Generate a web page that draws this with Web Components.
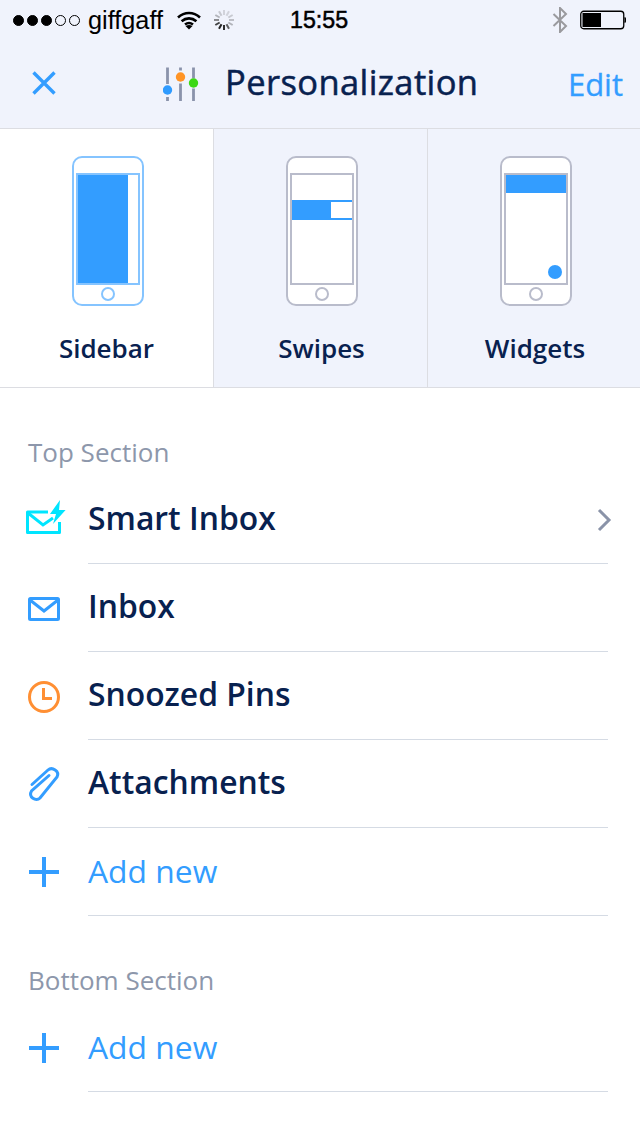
<!DOCTYPE html>
<html><head><meta charset="utf-8">
<style>
html,body{margin:0;padding:0;background:#fff}
body{width:640px;height:1136px;overflow:hidden;font-family:"Open Sans",sans-serif}
</style></head><body>
<app-header></app-header>
<tab-strip>
  <phone-tab label="Sidebar" kind="sidebar" active></phone-tab>
  <phone-tab label="Swipes" kind="swipes"></phone-tab>
  <phone-tab label="Widgets" kind="widgets"></phone-tab>
</tab-strip>
<section-title>Top Section</section-title>
<list-row icon="smart" chevron>Smart Inbox</list-row>
<list-row icon="inbox">Inbox</list-row>
<list-row icon="clock">Snoozed Pins</list-row>
<list-row icon="clip">Attachments</list-row>
<list-row icon="plus" add>Add new</list-row>
<section-title>Bottom Section</section-title>
<list-row icon="plus" add>Add new</list-row>
<script>
function def(name, css, html){
  customElements.define(name, class extends HTMLElement{
    connectedCallback(){
      const r=this.attachShadow({mode:'open'});
      r.innerHTML='<style>'+css+'</style>'+(typeof html==='function'?html(this):html);
    }
  });
}
const ops=[.15,.15,.2,.25,.3,.7,.95,1,.85,.5,.3,.2];
const spokes=ops.map((o,i)=>{const a=i*30*Math.PI/180;
  return `<line x1="${(11+5*Math.sin(a)).toFixed(2)}" y1="${(11-5*Math.cos(a)).toFixed(2)}" x2="${(11+10*Math.sin(a)).toFixed(2)}" y2="${(11-10*Math.cos(a)).toFixed(2)}" stroke="#222" stroke-width="2" stroke-opacity="${o}"/>`}).join('');
def('app-header',`
:host{display:block;height:129px;box-sizing:border-box;background:#f0f3fc;border-bottom:1px solid #dcdde2;color:#000}
.status{height:40px;display:flex;align-items:center;font-family:"Liberation Sans",sans-serif}
.dots{display:flex;gap:3px;margin-left:13px}
.dots i{width:11px;height:11px;border-radius:50%;box-sizing:border-box;border:1px solid #000;background:#000}
.dots i.o{background:none}
.carrier{font-size:25.300px;margin-left:8px;width:88px;line-height:40px;flex:none;white-space:nowrap}
.wifi{display:block}
.spin{margin-left:11px;display:block}
.time{margin-left:55px;font-size:23.200px;-webkit-text-stroke:.5px #000}
.bt{margin-left:auto;display:block;margin-right:12px}
.batt{display:block;margin-right:14px}
.nav{height:88px;display:flex;align-items:center}
.x{margin-left:32px;display:block;margin-top:-2px}
.sl{margin-left:107px;display:block;margin-top:-1px}
.title{margin-left:26px;font-size:34.500px;color:#08214f;letter-spacing:.4px;line-height:88px;-webkit-text-stroke:.5px #08214f;margin-top:-4px}
.edit{margin-left:auto;margin-right:17px;font-size:31px;color:#339dff;-webkit-text-stroke:.3px #339dff;margin-top:-1px}
`,`<div class="status">
<div class="dots"><i></i><i></i><i></i><i class="o"></i><i class="o"></i></div>
<span class="carrier">giffgaff</span>
<svg class="wifi" width="26" height="20" viewBox="0 0 26 20"><path d="M2 7.500C8.500 1.500 17.500 1.500 24 7.500M5.600 11.200C10 7.400 16 7.400 20.400 11.200M9 14.600C11.500 12.600 14.500 12.600 17 14.600" fill="none" stroke="#000" stroke-width="2.600"/><path d="M13 19.500L9.500 16Q13 14 16.500 16Z" fill="#000"/></svg>
<svg class="spin" width="22" height="22" viewBox="0 0 22 22">${spokes}</svg>
<span class="time">15:55</span>
<svg class="bt" width="16" height="26" viewBox="0 0 16 26"><path d="M1.500 7L14 19L8 25V1L14 7L1.500 19" fill="none" stroke="#9a9a9e" stroke-width="2"/></svg>
<svg class="batt" width="46" height="20" viewBox="0 0 46 20"><rect x=".75" y="1.250" width="43" height="17.500" rx="3" fill="none" stroke="#000" stroke-width="1.300"/><rect x="2.500" y="3" width="18.500" height="14" fill="#000"/><path d="M45 7.500Q46.500 10 45 12.500Z" fill="#000" stroke="#000"/></svg>
</div>
<div class="nav">
<svg class="x" width="24" height="24" viewBox="0 0 24 24"><path d="M1.500 1.500L22.500 22.500M22.500 1.500L1.500 22.500" stroke="#339dff" stroke-width="3.400" fill="none"/></svg>
<svg class="sl" width="36" height="36" viewBox="0 0 36 36"><g stroke="#8a93ab" stroke-width="2.800" fill="none"><path d="M4.500 1.500V18M4.500 31V35"/><path d="M17.500 1.500V4.500M17.500 17.500V35"/><path d="M30.500 1.500V12.500M30.500 22.500V35"/></g><circle cx="4.500" cy="24" r="4.700" fill="#2f9bff"/><circle cx="17.500" cy="11" r="4.700" fill="#ff9426"/><circle cx="30.500" cy="17" r="4.700" fill="#3cd815"/></svg>
<span class="title">Personalization</span>
<span class="edit">Edit</span>
</div>`);
def('tab-strip',`:host{display:flex;height:259px;box-sizing:border-box;border-bottom:1px solid #dcdde2}`,`<slot></slot>`);
function phone(kind,active){
  const s=active?'#85c4ff':'#b9bccb',b='#339dff';
  let inner='';
  if(kind==='sidebar')inner=`<rect x="6" y="19" width="50" height="108" fill="${b}"/>`;
  if(kind==='swipes')inner=`<path d="M6 45H66M6 63H66" stroke="${b}" stroke-width="2"/><rect x="6" y="44" width="39" height="20" fill="${b}"/>`;
  if(kind==='widgets')inner=`<rect x="6" y="19" width="60" height="18" fill="${b}"/><circle cx="55" cy="116" r="7" fill="${b}"/>`;
  return `<svg width="72" height="150" viewBox="0 0 72 150"><rect x="1" y="1" width="70" height="148" rx="9" fill="#fff" stroke="${s}" stroke-width="2"/><rect x="5" y="18" width="62" height="110" fill="#fff" stroke="${s}" stroke-width="2"/>${inner}<circle cx="36" cy="138" r="6" fill="#fff" stroke="${s}" stroke-width="2"/></svg>`;
}
def('phone-tab',`
:host{flex:none;width:214px;display:flex;flex-direction:column;align-items:center;background:#f0f3fc;border-right:1px solid #dcdde2;box-sizing:border-box;min-width:0}
:host(:first-child){background:#fff}
:host(:last-child){border-right:0;width:212px}
svg{display:block;margin-top:27px;margin-left:3px}
.l{margin-top:24px;font-size:26px;font-weight:600;color:#08214f;line-height:36px}
:host(:not(:first-child)) .l{margin-left:2px}
`,h=>phone(h.getAttribute('kind'),h.hasAttribute('active'))+`<div class="l">${h.getAttribute('label')}</div>`);
def('section-title',`:host{display:block;height:88px;box-sizing:border-box;padding-top:45px;padding-left:28px;font-size:26px;line-height:38px;color:#8d97ab}`,`<slot></slot>`);
const icons={
 smart:`<svg width="44" height="44" viewBox="0 0 44 44"><path d="M26 14H5.500V34.500H37.500V24" fill="none" stroke="#00e5ff" stroke-width="3" stroke-linejoin="round"/><path d="M6 15L21 27L31 20" fill="none" stroke="#00e5ff" stroke-width="3"/><path d="M38 2L28 16H34L31 26L43.600 12H37Z" fill="#00e5ff"/></svg>`,
 inbox:`<svg width="44" height="44" viewBox="0 0 44 44"><rect x="7.500" y="12.500" width="29" height="21" rx="1" fill="none" stroke="#339dff" stroke-width="3"/><path d="M8 14L22 25L36 14" fill="none" stroke="#339dff" stroke-width="3"/></svg>`,
 clock:`<svg width="44" height="44" viewBox="0 0 44 44"><circle cx="22" cy="23" r="14.500" fill="none" stroke="#ff8f33" stroke-width="3"/><path d="M21.500 14V24.500H30" fill="none" stroke="#ff8f33" stroke-width="3"/></svg>`,
 clip:`<svg width="44" height="44" viewBox="0 0 44 44"><path d="M10 22.500L26 8C30 4.500 38 9 35 15L18 36C14 40 6 35 9.500 29L27 13.500" fill="none" stroke="#339dff" stroke-width="3" stroke-linecap="round"/></svg>`,
 plus:`<svg width="44" height="44" viewBox="0 0 44 44"><path d="M22 7V37M7 22H37" stroke="#339dff" stroke-width="4" fill="none"/></svg>`
};
def('list-row',`
:host{display:flex;height:88px;box-sizing:border-box;align-items:stretch}
.i{width:88px;flex:none;display:flex;align-items:center;justify-content:flex-start}
.i svg{display:block;margin-left:22px}
.m{flex:1;display:flex;align-items:center;justify-content:space-between;border-bottom:1px solid #d5dbe4;margin-right:32px;font-size:31.850px;font-weight:600;color:#08214f;height:88px;box-sizing:border-box;padding-bottom:4px}
:host([add]) .m{font-weight:400;font-size:31.800px;color:#339dff;padding-bottom:3px}
.c{display:block;margin-right:-4px;margin-top:4px}
`,h=>`<div class="i">${icons[h.getAttribute('icon')]}</div><div class="m"><span><slot></slot></span>${h.hasAttribute('chevron')?`<svg class="c" width="16" height="24" viewBox="0 0 16 24"><path d="M3 2L13 12L3 22" fill="none" stroke="#8a93a8" stroke-width="3"/></svg>`:''}</div>`);
</script>
</body></html>
